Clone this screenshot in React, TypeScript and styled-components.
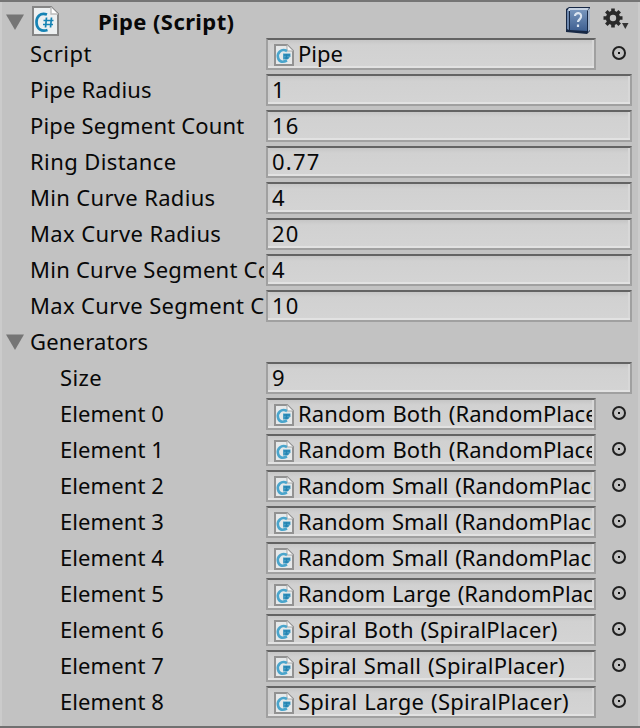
import React from "react";
import styled, { createGlobalStyle } from "styled-components";

const GlobalStyle = createGlobalStyle`
  *, *::before, *::after { box-sizing: border-box; }
  body { margin: 0; background: #c2c2c2; }
`;

const Panel = styled.main`
  width: 640px;
  height: 728px;
  overflow: hidden;
  background: #c2c2c2;
  border-top: 2px solid #757575;
  border-bottom: 2px solid #707070;
  box-shadow: inset 2px 0 #cbcbcb, inset -2px 0 #cbcbcb;
  font: 22px/30px "Noto Sans", "Lucida Grande", sans-serif;
  color: #080808;
`;

const Header = styled.header`
  display: flex;
  height: 36px;
  padding: 4px 11px 0 6px;
  align-items: flex-start;
`;

const Title = styled.h1<{ $tracking: number }>`
  flex: 1;
  margin: 0 0 0 39px;
  font-size: 22px;
  font-weight: 700;
  line-height: 30px;
  letter-spacing: ${(p) => p.$tracking}px;
`;

const Rows = styled.div`
  display: flex;
  flex-direction: column;
  gap: 4px;
`;

const Row = styled.div`
  display: flex;
  height: 32px;
  padding: 0 8px 0 6px;
`;

const Fold = styled.div`
  width: 24px;
  padding-top: 8px;
  svg { display: block; }
`;

const Label = styled.div<{ $indent?: boolean; $tracking: number }>`
  width: ${(p) => (p.$indent ? 204 : 234)}px;
  margin-left: ${(p) => (p.$indent ? 30 : 0)}px;
  margin-right: 2px;
  overflow: hidden;
  white-space: nowrap;
  letter-spacing: ${(p) => p.$tracking}px;
`;

const Field = styled.div`
  flex: 1;
  min-width: 0;
  display: flex;
  padding: 0 2px 0 4px;
  border: 2px solid #a0a0a0;
  border-top-color: #636363;
  background: linear-gradient(#c6c6c6, #d1d1d1 5px, #d4d4d4);
  box-shadow: inset 0 -2px #e2e2e2, inset 2px 0 #cdcdcd, inset -2px 0 #d8d8d8;
`;

const Value = styled.span<{ $tracking: number }>`
  flex: 1;
  min-width: 0;
  overflow: hidden;
  white-space: nowrap;
  line-height: 26px;
  height: 28px;
  word-spacing: 1px;
  letter-spacing: ${(p) => p.$tracking}px;
`;

const FileIcon = styled.svg`
  flex: none;
  display: block;
  margin: 4px 4px 0 2px;
`;

const Picker = styled.div`
  width: 36px;
  padding: 7px 0 0 15px;
  svg { display: block; }
`;

const ScriptIcon = styled.svg`
  display: block;
  margin-left: 2px;
`;

const HelpIcon = styled.svg`
  display: block;
  margin: 0 11px 0 0;
`;

const Triangle = () => (
  <svg width="18" height="17" viewBox="0 0 18 17">
    <path d="M0 .5h18L9 16z" fill="#757575" />
  </svg>
);

const SmallScript = () => (
  <FileIcon width="20" height="22" viewBox="0 0 20 22">
    <path d="M1 1h12l6 6v14H1z" fill="#e6e9ea" stroke="#929292" strokeWidth="2" />
    <path d="M13 1v6h6" fill="#f6f6f6" stroke="#aaa" />
    <path d="M13 7C7 4 3 9 4 13.500c1 5 5 5 9 3" fill="none" stroke="#4aa5cc" strokeWidth="2.600" />
    <path d="M9 9.500h7.500v3l-3 3H9z" fill="#4b9fc5" />
    <path d="M10 11h6M10.500 14h4M12.500 10v5" stroke="#2484b2" strokeWidth="1.300" />
  </FileIcon>
);

const ObjectPicker = () => (
  <Picker>
    <svg width="16" height="16" viewBox="0 0 16 16">
      <circle cx="8" cy="8" r="6" fill="none" stroke="#202020" strokeWidth="2" />
      <rect x="7" y="7" width="2" height="2" fill="#111" />
    </svg>
  </Picker>
);

type Item = { label: string; value: string; lt: number; vt: number; object?: boolean; indent?: boolean };

const fields: Item[] = [
  { label: "Script", value: "Pipe", lt: 0.5, vt: 0, object: true },
  { label: "Pipe Radius", value: "1", lt: 0.15, vt: 0.4 },
  { label: "Pipe Segment Count", value: "16", lt: 0.18, vt: 1.2 },
  { label: "Ring Distance", value: "0.77", lt: 0.4, vt: 1.2 },
  { label: "Min Curve Radius", value: "4", lt: 0.33, vt: 0.4 },
  { label: "Max Curve Radius", value: "20", lt: 0.4, vt: 1.2 },
  { label: "Min Curve Segment Count", value: "4", lt: 0.25, vt: 0.4 },
  { label: "Max Curve Segment Count", value: "10", lt: 0.36, vt: 1.2 },
];

const placers = [
  ["Random Both (RandomPlacer)", 0.09],
  ["Random Both (RandomPlacer)", 0.09],
  ["Random Small (RandomPlacer)", 0.03],
  ["Random Small (RandomPlacer)", 0.03],
  ["Random Small (RandomPlacer)", 0.03],
  ["Random Large (RandomPlacer)", 0.04],
  ["Spiral Both (SpiralPlacer)", 0.17],
  ["Spiral Small (SpiralPlacer)", 0.17],
  ["Spiral Large (SpiralPlacer)", 0.23],
] as const;

const generators: Item[] = [
  { label: "Size", value: "9", lt: 0.4, vt: 0.4, indent: true },
  ...placers.map(([value, vt], i) => ({
    label: `Element ${i}`, value, lt: 0.1, vt, object: true, indent: true,
  })),
];

const Property = ({ label, value, lt, vt, object, indent }: Item) => (
  <Row>
    <Fold />
    <Label $indent={indent} $tracking={lt}>{label}</Label>
    <Field>
      {object && <SmallScript />}
      <Value $tracking={vt}>{value}</Value>
    </Field>
    {object && <ObjectPicker />}
  </Row>
);

export default function App() {
  return (
    <>
      <GlobalStyle />
      <Panel>
        <Header>
          <Fold><Triangle /></Fold>
          <ScriptIcon width="27" height="30" viewBox="0 0 27 30">
            <path d="M1 1h18l7 7v21H1z" fill="#edf0f1" stroke="#858585" strokeWidth="2" />
            <path d="M19 1v7h7" fill="#fff" stroke="#bbb" strokeWidth="1.400" />
            <path d="M15 8.500C8 6 4.500 11 4.500 16c0 7 5 10 11 8" fill="none" stroke="#1683b4" strokeWidth="2.700" />
            <path d="M14.500 11.500l-1 10M19.500 11.500l-1 10M11.500 14.500h10M11 18.500h10" stroke="#1683b4" strokeWidth="1.700" />
          </ScriptIcon>
          <Title $tracking={0.4}>Pipe (Script)</Title>
          <HelpIcon width="26" height="28" viewBox="0 0 26 28">
            <defs>
              <linearGradient id="cover" x2="0" y2="1">
                <stop stopColor="#7896bd" /><stop offset="1" stopColor="#3e5f91" />
              </linearGradient>
            </defs>
            <path d="M1 3l3-2h21v24l-3 3L1 26z" fill="#172845" />
            <path d="M4 2h20l-2 3H2z" fill="#c6d2e2" />
            <path d="M23 4l2-2v22l-2 2z" fill="#a5b4c9" />
            <path d="M5 4h17v21L5 24z" fill="url(#cover)" />
            <path d="M2 4l2 1v19l-2-1z" fill="#6d87ad" />
            <path d="M10 10c0-4 7-4 6 1-1 3-3 3-3 5M13 18.500v2.500" fill="none" stroke="#dbe5f1" strokeWidth="2.200" />
          </HelpIcon>
          <svg width="27" height="28" viewBox="0 0 27 28">
            <g stroke="#292929" strokeWidth="3.600">
              <path d="M11 2.500v19M1.500 12h19M4.300 5.300l13.400 13.400M17.700 5.300L4.300 18.700" />
            </g>
            <circle cx="11" cy="12" r="5.200" fill="#c2c2c2" stroke="#292929" strokeWidth="4" />
            <path d="M20 17h6.500l-3.200 6z" fill="#333" />
          </svg>
        </Header>
        <Rows>
          {fields.map((item) => <Property key={item.label} {...item} />)}
          <Row>
            <Fold><Triangle /></Fold>
            <Label $tracking={0.2}>Generators</Label>
          </Row>
          {generators.map((item) => <Property key={item.label} {...item} />)}
        </Rows>
      </Panel>
    </>
  );
}
